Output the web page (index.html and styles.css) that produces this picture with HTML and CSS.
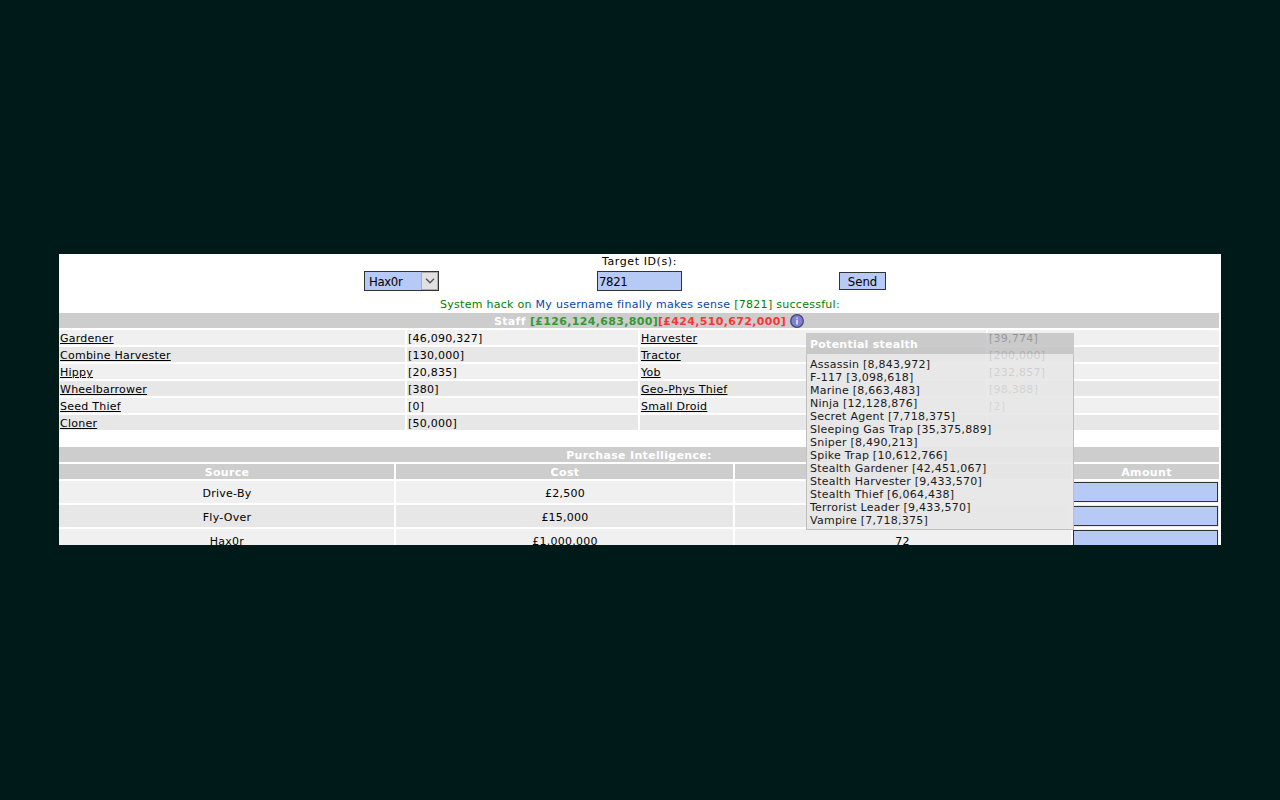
FILE: index.html
```html
<!DOCTYPE html>
<html lang="en">
<head>
<meta charset="utf-8">
<title>Intelligence</title>
<link rel="stylesheet" href="styles.css">
</head>
<body>
<main class="panel">
  <div class="target"><span>Target ID(s):</span></div>
  <form class="controls">
    <div class="select"><span>Hax0r</span><i class="arrow"><svg width="10" height="6" viewBox="0 0 10 6"><path d="M1 .8 5 4.8 9 .8" fill="none" stroke="#555" stroke-width="1.4"/></svg></i></div>
    <div class="field">7821</div>
    <div class="send">Send</div>
  </form>
  <div class="result">System hack on <a>My username finally makes sense</a> [7821] successful:</div>
  <div class="bar staff-title">Staff <span class="gain">[£126,124,683,800]</span><span class="loss">[£424,510,672,000]</span>
    <svg class="info" width="14" height="14" viewBox="0 0 14 14"><circle cx="7" cy="7" r="6.3" fill="#8080d4" stroke="#44447a" stroke-width="1.3"/><path d="M7 3.4v1.4M7 5.8v4.6" stroke="#fff" stroke-width="1.3"/></svg></div>
  <div class="staff">
    <div><u>Gardener</u></div><div>[46,090,327]</div><div><u>Harvester</u></div><div>[39,774]</div>
    <div class="alt"><u>Combine Harvester</u></div><div class="alt">[130,000]</div><div class="alt"><u>Tractor</u></div><div class="alt">[200,000]</div>
    <div><u>Hippy</u></div><div>[20,835]</div><div><u>Yob</u></div><div>[232,857]</div>
    <div class="alt"><u>Wheelbarrower</u></div><div class="alt">[380]</div><div class="alt"><u>Geo-Phys Thief</u></div><div class="alt">[98,388]</div>
    <div><u>Seed Thief</u></div><div>[0]</div><div><u>Small Droid</u></div><div>[2]</div>
    <div class="alt"><u>Cloner</u></div><div class="alt">[50,000]</div><div class="alt"></div><div class="alt"></div>
  </div>
  <div class="bar purchase-title">Purchase Intelligence:</div>
  <div class="purchase">
    <div class="bar">Source</div><div class="bar">Cost</div><div class="bar stock">In Stock</div><div class="bar">Amount</div>
    <div>Drive-By</div><div>£2,500</div><div class="stock">62</div><div class="amount"><b></b></div>
    <div class="alt">Fly-Over</div><div class="alt">£15,000</div><div class="alt stock">43</div><div class="alt amount"><b></b></div>
    <div>Hax0r</div><div>£1,000,000</div><div class="stock">72</div><div class="amount"><b></b></div>
  </div>
  <aside class="tooltip">
    <div class="tip-title">Potential stealth</div>
    <div class="tip-body">
      <div>Assassin [8,843,972]</div>
      <div>F-117 [3,098,618]</div>
      <div>Marine [8,663,483]</div>
      <div>Ninja [12,128,876]</div>
      <div>Secret Agent [7,718,375]</div>
      <div>Sleeping Gas Trap [35,375,889]</div>
      <div>Sniper [8,490,213]</div>
      <div>Spike Trap [10,612,766]</div>
      <div>Stealth Gardener [42,451,067]</div>
      <div>Stealth Harvester [9,433,570]</div>
      <div>Stealth Thief [6,064,438]</div>
      <div>Terrorist Leader [9,433,570]</div>
      <div>Vampire [7,718,375]</div>
    </div>
  </aside>
</main>
</body>
</html>
```
FILE: styles.css
```css
* { box-sizing: border-box; }
body {
  margin: 0;
  height: 800px;
  padding: 254px 59px 255px;
  background: #001a1a;
  font: 11px/17px Verdana, "DejaVu Sans", sans-serif;
  letter-spacing: .25px;
  color: #000;
}
.panel { position: relative; width: 1162px; height: 291px; background: #fff; overflow: hidden; }
.target { height: 15px; line-height: 15px; text-align: center; padding-right: 1px; letter-spacing: .6px; }
.controls {
  display: flex;
  align-items: center;
  height: 24px;
  padding-left: 305px;
  font: 13px/18px Tahoma, "DejaVu Sans Condensed", "DejaVu Sans", sans-serif;
  letter-spacing: -.35px;
}
.select, .field, .send { border: 1px solid #333; background: #b7c9f5; }
.select { display: flex; justify-content: space-between; width: 75px; height: 20px; padding-left: 4px; line-height: 20px; }
.arrow { display: flex; align-items: center; justify-content: center; width: 17px; height: 18px; background: #e1e1e1; border: 1px solid #adadad; }
.field { width: 85px; height: 20px; margin-left: 158px; padding-left: 1px; line-height: 20px; }
.send { width: 47px; height: 18px; margin-left: 157px; text-align: center; line-height: 18px; letter-spacing: 0; }
.result { height: 20px; padding: 3px 0 0 0; text-align: center; color: #008000; letter-spacing: .28px; }
.result a { color: #0645ad; }
.bar { background: #cdcdcd; color: #fff; font-weight: bold; text-align: center; height: 15px; letter-spacing: .33px; }
.staff-title { display: flex; justify-content: center; width: 1160px; padding-left: 20px; white-space: pre; }
.gain { color: #339933; }
.loss { color: #ff3333; }
.info { margin: 1px 0 0 4px; }
.staff { display: grid; grid-template-columns: 346px 231px 346px 231px; grid-auto-rows: 15px; gap: 2px; padding-top: 2px; }
.staff > div { background: #f0f0f0; padding-left: 1px; white-space: nowrap; }
.staff > .alt, .purchase > .alt { background: #e7e7e7; }
u { text-underline-offset: 1px; }
.purchase-title { width: 1160px; margin-top: 17px; }
.purchase { display: grid; grid-template-columns: 335px 337px 336px 146px; grid-template-rows: 15px 22px 22px 22px; gap: 2px; padding-top: 2px; }
.purchase > div:not(.amount) { padding-left: 1px; }
.purchase > div.stock { padding: 0 1px 0 0; }
.purchase > div:not(.bar) { background: #f0f0f0; text-align: center; line-height: 25px; }
.purchase > div.alt:not(.bar) { background: #e7e7e7; }
.amount b { display: block; height: 20px; margin: 1px 1px 0 0; border: 1px solid #333; background: #b7c9f5; }
.tooltip { position: absolute; left: 747px; top: 79px; width: 268px; height: 197px; }
.tip-title { height: 21px; padding: 3px 4px; color: #fff; font-weight: bold; background: linear-gradient(rgba(190, 190, 190, .75), rgba(197, 197, 197, .9)); }
.tip-body { height: 176px; padding: 4px 3px; line-height: 13px; color: #1a1a1a; border: 1px solid #c0c0c0; border-top: 0; background: linear-gradient(rgba(231, 231, 231, .88), rgba(231, 231, 231, .94) 40%); }
```
